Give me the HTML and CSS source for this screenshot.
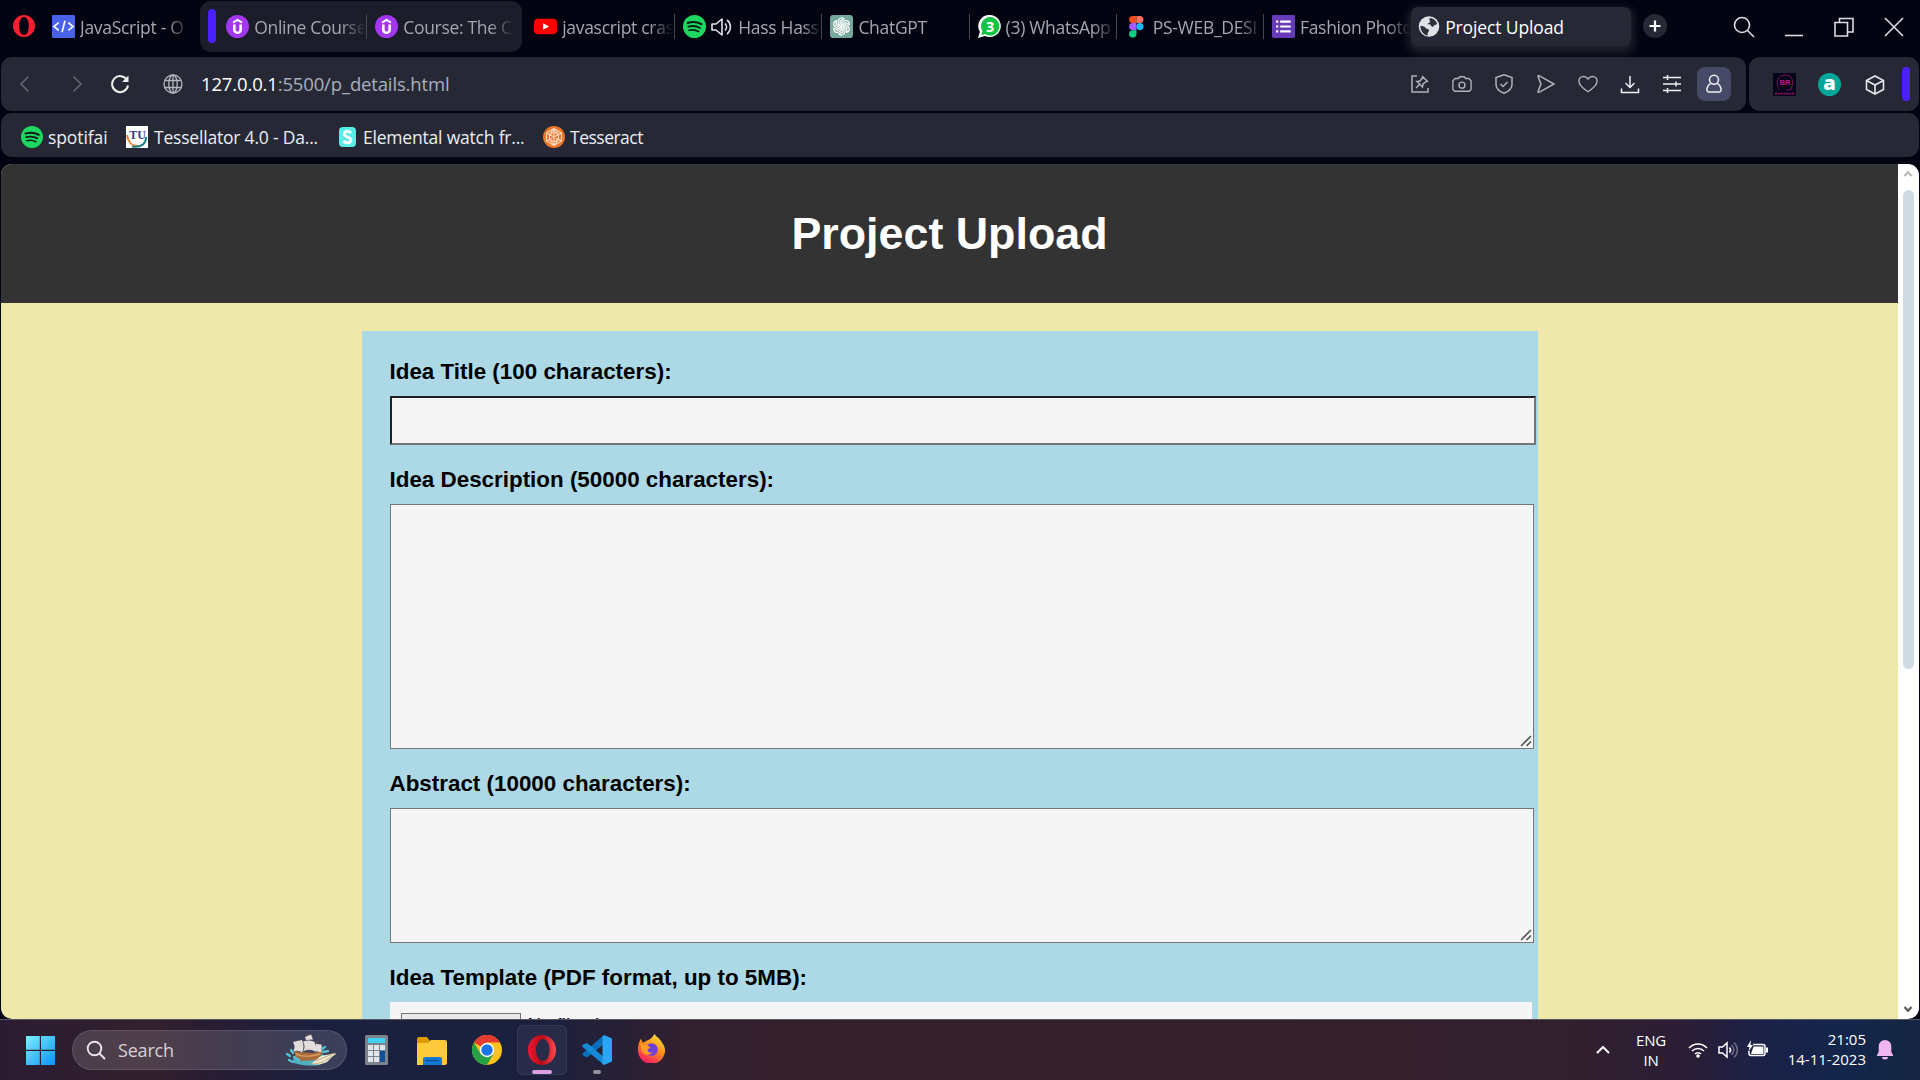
FILE: index.html
```html
<!DOCTYPE html>
<html lang="en">
<head>
<meta charset="utf-8">
<title>Project Upload</title>
<link rel="stylesheet" href="styles.css">
</head>
<body>
<svg class="defs" width="0" height="0">
  <defs>
    <symbol id="spotify" viewBox="0 0 24 24"><circle cx="12" cy="12" r="12" fill="#1ed760"/><g fill="none" stroke="#0b1f18" stroke-linecap="round"><path d="M5 8.2c5-1.500 10-1 14.300 1.300" stroke-width="2.300"/><path d="M5.600 12.200c4.300-1.200 8.600-.8 12.200 1.300" stroke-width="1.900"/><path d="M6.200 16c3.600-.9 7-.6 10.200 1.200" stroke-width="1.600"/></g></symbol>
    <symbol id="udemy" viewBox="0 0 24 24"><circle cx="12" cy="12" r="12" fill="#a435f0"/><path d="M7.300 8 12 5.200 16.700 8" fill="none" stroke="#fff" stroke-width="2"/><path d="M8.700 10v5.300a3.300 3.300 0 0 0 6.600 0V10" fill="none" stroke="#fff" stroke-width="2.700"/></symbol>
  </defs>
</svg>
<div class="browser">
  <div class="tabstrip">
    <svg class="opera-menu" viewBox="0 0 22 22"><path fill="#fa1e32" fill-rule="evenodd" d="M11 0a11 11 0 1 0 0 22 11 11 0 0 0 0-22zM11 2c3 0 4.800 4 4.800 9s-1.800 9-4.800 9-4.800-4-4.800-9S8 2 11 2z"/></svg>
    <div class="tab"><svg class="fav" viewBox="0 0 24 24"><rect width="24" height="24" rx="1" fill="#4a62e8"/><path d="M7 8l-5 4 5 4M17 8l5 4-5 4M13.500 6l-3 12" fill="none" stroke="#fff" stroke-width="1.700"/></svg><span>JavaScript - O</span></div>
    <div class="group">
      <i class="bar"></i>
      <div class="tab sep"><svg class="fav"><use href="#udemy"/></svg><span>Online Course</span></div>
      <div class="tab"><svg class="fav"><use href="#udemy"/></svg><span>Course: The C</span></div>
    </div>
    <div class="tab sep"><svg class="fav" viewBox="0 0 24 24"><rect y="4" width="24" height="16" rx="4" fill="#f00"/><path d="M9.500 8.500v7l6.200-3.500z" fill="#fff"/></svg><span>javascript cras</span></div>
    <div class="tab sep"><svg class="fav"><use href="#spotify"/></svg><svg class="snd" viewBox="0 0 22 20"><path d="M1 7v6h4l6 5V2L5 7zM14 6.500c2 2 2 5 0 7M16 3c4.500 3.500 4.500 10.500 0 14" fill="none" stroke="#e4e5ea" stroke-width="1.600" stroke-linejoin="round"/></svg><span>Hass Hass</span></div>
    <div class="tab sep"><svg class="fav" viewBox="0 0 24 24"><rect width="24" height="24" rx="3.500" fill="#75a99b"/><g fill="none" stroke="#fff" stroke-width="1.300"><path id="gp" d="M12 12l-3.500-2V6.500a3.500 3.500 0 0 1 6-2.300l-4 2.300v3.800"/><use href="#gp" transform="rotate(60 12 12)"/><use href="#gp" transform="rotate(120 12 12)"/><use href="#gp" transform="rotate(180 12 12)"/><use href="#gp" transform="rotate(240 12 12)"/><use href="#gp" transform="rotate(300 12 12)"/></g></svg><span>ChatGPT</span></div>
    <div class="tab sep"><svg class="fav" viewBox="0 0 24 24"><path d="M12.500 0a11.500 11.500 0 1 1-5.300 21.800L0 24l2-6.500A11.500 11.500 0 0 1 12.500 0z" fill="#fff"/><path d="M12.500 2.200a9.600 9.600 0 1 1-5 17.700L3.500 21l1-4.300a9.600 9.600 0 0 1 8-14.500z" fill="#12c443"/><text x="12.500" y="17.300" text-anchor="middle" class="wa">3</text></svg><span>(3) WhatsApp</span></div>
    <div class="tab sep"><svg class="fav" viewBox="0 0 24 24"><path d="M12 1H8a3.700 3.700 0 0 0 0 7.400h4z" fill="#f24e1e"/><path d="M12 1h3.500a3.700 3.700 0 0 1 0 7.400H12z" fill="#ff7262"/><path d="M12 8.400H8a3.700 3.700 0 0 0 0 7.400h4z" fill="#a259ff"/><circle cx="15.600" cy="12.100" r="3.700" fill="#1abcfe"/><path d="M12 15.800H8.300a3.900 3.900 0 1 0 3.700 4z" fill="#0acf83"/></svg><span>PS-WEB_DESI</span></div>
    <div class="tab"><svg class="fav" viewBox="0 0 24 24"><rect width="24" height="24" rx="1.500" fill="#673ab7"/><path d="M8.500 7h11M8.500 12h11M8.500 17h11M4.200 7h2.400M4.200 12h2.400M4.200 17h2.400" stroke="#fff" stroke-width="2.300"/></svg><span>Fashion Photo</span></div>
    <div class="tab active"><svg class="fav" viewBox="0 0 24 24"><circle cx="11.500" cy="12" r="10.700" fill="#dfe1e5"/><path d="M12 3.500c3-1 7 2 8 6-1 1-3 .5-3.500 2-.5 1.200-2.500 1-3-.5-.4-1.300-2-1.500-3.500-1 0-2 2.500-1.500 2.500-3 0-1.200-1-1.500-.5-3.500zM2.500 11.500c3 0 4.500.5 5.500 2 1 1.300 3.500.8 3.500 2.500s-1.500 2-1.500 3.500c0 1 .5 1.500 0 2-4-.5-7.500-5-7.500-10z" fill="#2d303b"/></svg><span>Project Upload</span></div>
    <svg class="newtab" viewBox="0 0 24 24"><circle cx="12" cy="12" r="12" fill="#262935"/><path d="M12 6.500v11M6.500 12h11" stroke="#fff" stroke-width="2.200"/></svg>
    <div class="winctl">
      <svg viewBox="0 0 22 22"><circle cx="9" cy="9" r="7.500"/><path d="M14.500 14.500l6.500 6.500"/></svg>
      <svg viewBox="0 0 22 22"><path d="M2 19.500h18"/></svg>
      <svg viewBox="0 0 22 22"><path d="M2 6.500h12.500V20H2zM6.500 6.500v-4H20V16h-5.500"/></svg>
      <svg viewBox="0 0 22 22"><path d="M2 2l18 18M20 2L2 20"/></svg>
    </div>
  </div>
  <div class="toolbar">
    <div class="panel address">
      <svg class="nav dim" viewBox="0 0 20 20"><path d="M13.500 2.500 6 10l7.500 7.500"/></svg>
      <svg class="nav dim" viewBox="0 0 20 20"><path d="M6.500 2.500 14 10l-7.500 7.500"/></svg>
      <svg class="nav" viewBox="0 0 20 20"><path d="M17 6a8 8 0 1 0 1 5.500" stroke-width="2"/><path d="M18.500 1.500v6.500H12z" fill="#eee" stroke="none"/></svg>
      <svg class="nav globe" viewBox="0 0 20 20"><circle cx="10" cy="10" r="9"/><ellipse cx="10" cy="10" rx="4.200" ry="9"/><path d="M10 1v18M2 6.500h16M2 13.500h16"/></svg>
      <p class="url"><b>127.0.0.1</b>:5500/p_details.html</p>
      <div class="tools">
        <svg viewBox="0 0 20 20"><path d="M7 2H2v16h16v-4M12 2l6 6M13 3l-3 4-3 .5 5.500 5.500.5-3 4-3M9.500 10.500 6 14"/></svg>
        <svg viewBox="0 0 22 20"><path d="M7 4l1.500-2h5L15 4h3.500L21 6.500V16l-2 2H3l-2-2V6.500L3.500 4zM11 8a3.300 3.300 0 1 0 0 6.600A3.300 3.300 0 0 0 11 8z"/></svg>
        <svg viewBox="0 0 20 20"><path d="M10 .8 18 3.500v7c0 4-3.500 7-8 8.700-4.500-1.700-8-4.700-8-8.700v-7zM6.500 10l2.500 2.500 4.500-4.500"/></svg>
        <svg viewBox="0 0 20 20"><path d="M2 2.500Q2 1 3.500 1.800L18 10 3.500 18.200Q2 19 2 17.500L5 10z"/></svg>
        <svg viewBox="0 0 22 20"><path d="M11 18.500C5.500 15 1 11.500 1 6.700 1 1.300 8 0 11 4.500 14 0 21 1.300 21 6.700c0 4.800-4.500 8.300-10 11.800z"/></svg>
        <svg class="lit" viewBox="0 0 20 20"><path d="M10 2v11M5.500 9l4.500 4.500L14.500 9M1.500 14.500V18.500h17v-4"/></svg>
        <svg class="lit" viewBox="0 0 20 20"><path d="M1 3.500h18M1 10h18M1 16.500h18M5.500 1v5M14 7.500v5M5.500 14v5"/></svg>
        <span class="user"><svg class="lit" viewBox="0 0 20 20"><circle cx="10" cy="5.800" r="4.500"/><path d="M6.500 9.500C2 12.500 2 18 5 18h10c3 0 3-5.500-1.500-8.500"/></svg></span>
      </div>
    </div>
    <div class="panel ext">
      <svg class="head" viewBox="0 0 24 24"><rect width="24" height="24" fill="#03041a"/><path d="M6.500 17C2 11 5 2 12.500 2 19 2 21 7 20.500 11c-.2 3-1.500 4-1.500 6l-5 1" fill="none" stroke="#8d125e"/><text x="12.500" y="13" text-anchor="middle" class="gr">BR</text><path d="M2 21.500h20" stroke="#a0106b" stroke-width="2" stroke-dasharray="2 1"/></svg>
      <span class="amz">a</span>
      <svg class="cube" viewBox="0 0 20 20"><path d="M10 1l8.500 4.500v9L10 19l-8.500-4.500v-9zM1.500 5.500 10 10l8.500-4.500M10 10v9"/></svg>
      <i class="bar"></i>
    </div>
  </div>
  <div class="panel bookmarks">
    <a><svg><use href="#spotify"/></svg><span class="b1">spotifai</span></a>
    <a><svg viewBox="0 0 22 22"><rect width="22" height="22" fill="#fff"/><path d="M1 9c1 8 6 11 11 11" fill="none" stroke="#e88634" stroke-width="2"/><path d="M20 11c0 7-5 11-14 9.500" fill="none" stroke="#187d83" stroke-width="2"/><text x="11.500" y="13" text-anchor="middle" class="tu">TU</text></svg><span class="b2">Tessellator 4.0 - Da...</span></a>
    <a><svg class="s" viewBox="0 0 17 22"><rect y="1" width="17" height="20" rx="4" fill="#58ece6"/><path d="M12 7C10 4.500 5 5 5 8s7 3 7 6-5 4-7.500 1" fill="none" stroke="#fff" stroke-width="2.800"/></svg><span class="b3">Elemental watch fr...</span></a>
    <a><svg viewBox="0 0 22 22"><circle cx="11" cy="11" r="11" fill="#ee7428"/><g fill="none" stroke="#fbd7bd" stroke-width="1.100"><path d="M11 2.500 18.500 7v8L11 19.500 3.500 15V7zM11 6l4.500 2.500v5L11 16l-4.500-2.500v-5zM3.500 7l15 8M18.500 7l-15 8M11 2.500v17M6.500 8.500 11 2.500l4.500 6M6.500 13.500l4.500 6 4.500-6"/></g></svg><span class="b4">Tesseract</span></a>
  </div>
  <div class="viewport">
    <div class="page">
      <header><h1>Project Upload</h1></header>
      <form>
        <label>Idea Title (100 characters):</label>
        <input class="field title" type="text">
        <label>Idea Description (50000 characters):</label>
        <div class="field area big"><svg viewBox="0 0 12 12"><path d="M1 11 11 1M6.500 11 11 6.500"/></svg></div>
        <label>Abstract (10000 characters):</label>
        <div class="field area small"><svg viewBox="0 0 12 12"><path d="M1 11 11 1M6.500 11 11 6.500"/></svg></div>
        <label>Idea Template (PDF format, up to 5MB):</label>
        <div class="file"><button type="button">Choose File</button><span>No file chosen</span></div>
      </form>
    </div>
    <div class="scroll">
      <svg class="up" viewBox="0 0 10 8"><path d="M1.500 6 5 2.200 8.500 6"/></svg>
      <i></i>
      <svg class="down" viewBox="0 0 10 8"><path d="M1.500 2 5 5.800 8.500 2"/></svg>
    </div>
  </div>
</div>
<div class="taskbar">
  <svg class="win" viewBox="0 0 30 30"><defs><linearGradient id="wg" x1="0" y1="0" x2="1" y2="1"><stop stop-color="#7af0ff"/><stop offset="1" stop-color="#0a93f5"/></linearGradient></defs><path d="M0 0h14.300v14.300H0zM15.500 0H30v14.300H15.500zM0 15.500h14.300V30H0zM15.500 15.500H30V30H15.500z" fill="url(#wg)"/></svg>
  <div class="search">
    <svg class="lens" viewBox="0 0 20 20"><circle cx="8.500" cy="8.500" r="6.800"/><path d="M13.500 13.500 19 19"/></svg>
    <span>Search</span>
    <svg class="ship" viewBox="0 0 52 32"><path d="M9 29c-2-4 0-8 4-9h24l6 3-8 8c-9 1-17 1-26-2z" fill="#4fb0c0"/><path d="M9 15l4 3 16 1 9-4c-1 6-3 9-7 11l-14 1c-5-1-8-6-8-12z" fill="#a86b3c"/><path d="M11 20c6 3 14 3 24 0" stroke="#d89a5a" stroke-width="1.500" fill="none"/><path d="M23 0v18M13 6v12M32 7v10" stroke="#7b5b45"/><path d="M20 3l6-2.500 2 5-7 .5zM18 7.500c4-1.500 8-1.500 11.500.5 2 4 2 7 1 10-4-3-8-3-12.500-.5 2-3 2-7 0-10zM8 8l9-2c2 4 2 9 0 12.500-3-2-6-2.500-9-1C10 15 10 11 8 8zM31 10l5.500.500q1 4-.5 8l-5-1.500z" fill="#e3dcdc"/><path d="M26 30l10-8 15-3-9 9c-4 2-10 3-16 2z" fill="#f2e9d2"/><path d="M26 30c7 0 12-2 15-4l10-6M31 27l16-7" stroke="#c3ac83" fill="none"/><path d="M2 20l3 2M4 26l4 2M6 16l2 3M37 15l3-2M38 18l5-1M9 23l5 3" stroke="#55c2d3" stroke-width="2.300" stroke-linecap="round"/></svg>
  </div>
  <svg class="calc" viewBox="0 0 23 30"><rect width="23" height="30" rx="1.500" fill="#7d838b"/><rect x="3" y="3" width="17" height="5" fill="#3fd0f5"/><g fill="#e1e6ec"><path d="M3 10h5v5H3zM9 10h5v5H9zM15 10h5v5h-5zM3 16h5v5H3zM9 16h5v5H9zM3 22h5v5H3zM9 22h5v5H9z"/></g><path d="M15 16h5v11h-5z" fill="#11509c"/></svg>
  <svg class="folder" viewBox="0 0 30 28"><path d="M0 2q0-2 2-2h8l3 4h15v6H0z" fill="#dd9a05"/><path d="M0 6h11l3-3h14q2 0 2 2v21q0 2-2 2H0z" fill="#fdca3e"/><path d="M6 28v-6q0-2 2-2h15q2 0 2 2v6z" fill="#1279d3"/><path d="M9 23.500h13" stroke="#07529d" stroke-width="1.500"/></svg>
  <svg class="chrome" viewBox="0 0 30 30"><circle cx="15" cy="15" r="15" fill="#fcc31e"/><path d="M15 15 2 7.500A15 15 0 0 1 28 7.500H15z" fill="#e33b2e"/><path d="M2 7.500 8.500 18.800 15 22.500 15 30A15 15 0 0 1 2 7.500z" fill="#26a148"/><path d="M15 30l6.500-11.300-6.500 3.800-6.500-3.700z" fill="#26a148"/><circle cx="15" cy="15" r="7.200" fill="#fff"/><circle cx="15" cy="15" r="5.700" fill="#1b73e8"/></svg>
  <div class="app open"><svg viewBox="0 0 30 30"><defs><linearGradient id="og" x1="0" x2="1"><stop stop-color="#ef1630"/><stop offset=".5" stop-color="#b80a18"/><stop offset="1" stop-color="#ff4b50"/></linearGradient></defs><path fill="url(#og)" fill-rule="evenodd" d="M15 0C7 0 1 6.500 1 15s6 15 14 15 14-6.500 14-15S23 0 15 0zM16 4c4 0 6.500 5 6.500 11s-2.500 11-6.500 11-7-5-7-11S12 4 16 4z"/></svg><i></i></div>
  <div class="app code"><svg viewBox="0 0 30 30"><path d="M22 0v9L5 22.500 1 20.500 0 19z" fill="#0a6fba"/><path d="M22 30v-8L5 8 1 9.500 0 11.500z" fill="#1489d6"/><path d="M22 0l8 3.500v23L22 30l-1.500-1.500v-27z" fill="#2ba4f3"/></svg><i></i></div>
  <svg class="fox" viewBox="0 0 30 30"><defs><linearGradient id="fg" x1=".8" y1="0" x2=".3" y2="1"><stop stop-color="#ffe43a"/><stop offset=".5" stop-color="#ff8a1c"/><stop offset="1" stop-color="#f5156c"/></linearGradient></defs><path d="M18 0c2 3 5 4 8 9 3 4 4 8 2 13a14 14 0 0 1-26 0C0 17 1 10 4 5l2 4 4-2c3-1 6-3 8-7z" fill="url(#fg)"/><circle cx="15" cy="16" r="6.500" fill="#7140d8"/><path d="M3 10l7 1 4 3-3 2c0 3 3 4 5 3-2 4-9 3-11-1z" fill="#ff9a22"/></svg>
  <div class="tray">
    <svg class="chev" viewBox="0 0 14 8"><path d="M1 7l6-6 6 6"/></svg>
    <p class="lang">ENG<br>IN</p>
    <svg class="wifi" viewBox="0 0 20 16"><path d="M1 6c5-5.500 13-5.500 18 0M4 9c3.500-3.500 8.500-3.500 12 0M7 12c1.500-1.800 4.500-1.800 6 0"/><circle cx="10" cy="14" r="1.800" fill="#fff" stroke="none"/></svg>
    <svg class="vol" viewBox="0 0 20 18"><path d="M1 6v6h3.500L9 16V2L4.500 6zM11.500 6.500c1.300 1.500 1.300 3.500 0 5"/><path d="M13.500 4c3 3 3 7 0 10M16 1.500c4.500 4.500 4.500 10.500 0 15" opacity=".35"/></svg>
    <svg class="bat" viewBox="0 0 21 17"><path d="M6 4.500h10q2 0 2 2v7q0 2-2 2H4q-2 0-2-2V11"/><path d="M6.500 6.500h10v7.500H4zM19 7.500h2v5h-2zM4 0 0 7h2.500L1.500 11.500 6 5H3.500z" fill="#fff" stroke="none"/></svg>
    <p class="clock">21:05<br>14-11-2023</p>
    <svg class="bell" viewBox="0 0 16 20"><path d="M8 0a6.300 6.300 0 0 1 6.300 6.300V12L16 15v1H0v-1l1.700-3V6.300A6.300 6.300 0 0 1 8 0zM5 17h6a3 2.500 0 0 1-6 0z" fill="#efb6f0"/></svg>
  </div>
</div>
</body>
</html>
```
FILE: styles.css
```css
* { box-sizing: border-box; }
body { margin: 0; width: 1920px; height: 1080px; overflow: hidden; background: #020412; font-family: "Open Sans", "Noto Sans", sans-serif; display: flex; flex-direction: column; }
svg { display: block; flex: none; }
p { margin: 0; }
.defs { display: none; }
.browser { height: 1019px; padding: 0 1px; display: flex; flex-direction: column; }

.tabstrip { height: 57px; flex: none; display: flex; align-items: flex-start; padding-left: 12px; }
.opera-menu { width: 22px; height: 22px; margin: 15px 9px 0 0; }
.tab { width: 147.200px; height: 39px; margin-top: 7px; padding: 0 0 0 8px; display: flex; align-items: center; gap: 5px; color: #a6a7ac; font-size: 17.500px; letter-spacing: -.3px; white-space: nowrap; flex: none; }
.tab span { flex: 1; overflow: hidden; line-height: 28px; padding-top: 1px; -webkit-mask-image: linear-gradient(90deg, #000 78%, transparent); mask-image: linear-gradient(90deg, #000 78%, transparent); }
.tab.sep { border-right: 1px solid #454753; height: 25px; margin-top: 14px; }
.fav { width: 23px; height: 23px; }
.snd { width: 22px; height: 20px; }
.group { width: 322px; height: 51px; margin: 1px 4px 0 9px; border-radius: 11px; background: #1b1d2a; display: flex; padding-left: 8px; }
.group .tab { margin-top: 6px; }
.group .tab.sep { margin-top: 13px; width: 149px; }
.group + .tab.sep { width: 149px; }
.bar { width: 8px; height: 34px; border-radius: 4px; background: #4a20ff; flex: none; }
.group .bar { margin: 8px 2px 0 0; }
.wa { font: bold 15px "Open Sans", sans-serif; fill: #fff; }
.tab.active { width: 220px; height: 39px; margin-left: 0; padding-left: 7px; border-radius: 7px; background: #262935; color: #fff; box-shadow: 0 4px 9px 3px #20232e; gap: 4px; letter-spacing: -.12px; }
.tab.active span { -webkit-mask-image: none; mask-image: none; }
.newtab { width: 24px; height: 24px; margin: 14px 0 0 12px; }
.winctl { margin: 16px 14px 0 auto; display: flex; gap: 28px; }
.winctl svg { width: 22px; height: 22px; fill: none; stroke: #dcdde1; stroke-width: 1.600; }

.panel { background: #262935; border-radius: 11px; display: flex; align-items: center; }
.toolbar { height: 54px; flex: none; display: flex; gap: 3px; }
.address { width: 1745px; flex: none; padding: 0 15px 0 14px; }
.nav { width: 20px; height: 20px; fill: none; stroke: #eee; stroke-width: 1.500; margin-right: 32px; }
.nav + .nav { margin-right: 23px; }
.nav.dim { stroke: #666975; }
.nav.globe { stroke: #b5b7bd; stroke-width: 1.300; }
.nav + .nav.globe { margin-right: 17px; margin-left: 10px; }
.url { font-size: 18.500px; letter-spacing: -.15px; color: #a9b0bd; line-height: 28px; margin-left: 1px; }
.url b { font-weight: 400; color: #fff; }
.tools { margin-left: auto; display: flex; align-items: center; gap: 22px; }
.tools svg { width: 20px; height: 20px; fill: none; stroke: #b2b3b9; stroke-width: 1.500; }
.tools svg.lit { stroke: #f0f0f3; }
.user { width: 34px; height: 34px; border-radius: 8px; background: #474a66; display: grid; place-items: center; margin-left: -7px; }
.ext { width: 170px; flex: none; padding: 0 9px 0 24px; }
.head { width: 23px; height: 23px; }
.gr { font: bold 8px "Liberation Sans", sans-serif; fill: #c51586; }
.amz { width: 23px; height: 23px; border-radius: 50%; background: #00a698; color: #fff; font: 800 20px/19px "Open Sans", sans-serif; text-align: center; margin-left: 22px; }
.cube { width: 20px; height: 20px; margin: 2px 0 0 24px; fill: none; stroke: #e6e6e9; stroke-width: 1.600; }
.ext .bar { margin-left: auto; }

.bookmarks { height: 44px; flex: none; margin: 2px 0 7px; padding: 4px 0 0 20px; }
.bookmarks a { display: flex; align-items: center; gap: 5px; font-size: 17.500px; color: #eceef2; white-space: nowrap; line-height: 26px; }
.bookmarks svg { width: 22px; height: 22px; }
.bookmarks svg.s { width: 17px; }
.b1 { width: 60px; margin-right: 18px; letter-spacing: -.1px; }
.b2 { width: 165px; margin: 0 20px 0 1px; letter-spacing: -.2px; }
.b3 { width: 162px; margin: 0 18px 0 2px; letter-spacing: -.2px; }
.b4 { letter-spacing: -.5px; }
.tu { font: bold 12px "Liberation Serif", serif; fill: #3a3a86; }

.viewport { height: 855px; flex: none; display: flex; border-radius: 11px; overflow: hidden; }
.page { width: 1897px; flex: none; background: #eee8aa; overflow: hidden; font-family: "Liberation Sans", Arial, sans-serif; }
header { height: 139px; background: #333; color: #fff; display: grid; place-items: center; padding-bottom: 2px; }
h1 { margin: 0; font-size: 44.800px; line-height: 52px; }
form { width: 1176px; margin: 28px auto; padding: 28px; background: #add8e6; }
label { display: block; height: 26px; margin-bottom: 11px; font-size: 22.400px; line-height: 25px; font-weight: 700; letter-spacing: 0; white-space: nowrap; }
.field { display: block; margin: 0 0 22px; background: #f5f5f5; }
.title { width: 1146px; height: 49px; padding: 0 14px; border: 2px solid; border-color: #202024 #767676 #767676 #202024; border-radius: 0; }
.area { width: 1144px; border: 1px solid #767676; display: flex; justify-content: flex-end; align-items: flex-end; padding: 0 1px 1px; }
.area svg { width: 12px; height: 12px; stroke: #555; stroke-width: 1.600; }
.big { height: 245px; }
.small { height: 135px; }
.file { width: 1142px; height: 54px; background: #f5f5f5; padding: 11px; display: flex; align-items: flex-start; gap: 7px; font-size: 18.700px; }
.file button { width: 120px; height: 30px; padding: 0; border: 1px solid #767676; background: #e9e9e9; font: 18.700px "Liberation Sans", sans-serif; }
.file span { line-height: 22px; padding-top: 1px; }
.scroll { width: 21px; background: #fff; display: flex; flex-direction: column; align-items: center; padding: 6px 1px 6px 0; }
.scroll i { width: 11px; height: 479px; margin-top: 12px; border-radius: 6px; background: #d0dbe3; }
.scroll svg { width: 10px; height: 8px; fill: none; stroke: #b9b9b9; stroke-width: 2.200; }
.scroll svg.down { margin-top: auto; stroke: #5c5c5c; }

.taskbar { height: 61px; border-top: 1px solid #555663; background: linear-gradient(90deg, #2a1c32 0, #33202d 150px, #2a1d32 200px, #1b203f 320px, #1b203f 540px, #33202d 690px, #35212a 1000px, #33202d 1560px, #2a1d36 1690px, #1b2148 1760px, #13264a 1850px, #152542 1920px); display: flex; align-items: flex-start; padding-left: 26px; }
.win { width: 29px; height: 29px; margin: 16px 17px 0 0; }
.search { width: 275px; height: 40px; margin-top: 10px; border-radius: 20px; background: rgba(255,255,255,.14); border: 1px solid rgba(255,255,255,.12); display: flex; align-items: center; padding: 0 9px 0 13px; color: #d8d1d6; font-size: 18px; }
.search span { margin-left: 12px; letter-spacing: -.2px; }
.lens { width: 20px; height: 20px; fill: none; stroke: #e8e4e8; stroke-width: 1.900; }
.ship { width: 52px; height: 32px; margin-left: auto; }
.calc { width: 23px; height: 30px; margin: 15px 0 0 18px; }
.folder { width: 30px; height: 28px; margin: 17px 0 0 29px; }
.chrome { width: 30px; height: 30px; margin: 15px 0 0 25px; }
.app { width: 50px; height: 50px; display: flex; flex-direction: column; align-items: center; padding-top: 10px; margin: 5px 0 0; }
.app svg { width: 30px; height: 30px; }
.app i { height: 4px; border-radius: 2px; margin-top: 5px; }
.open { margin-left: 15px; border-radius: 6px; background: #282c49; box-shadow: inset 0 0 0 1px #363954; }
.open i { width: 20px; background: #db9fe2; }
.code { margin-left: 5px; }
.code i { width: 8px; background: #9493a2; }
.fox { width: 29px; height: 29px; margin: 14px 0 0 15px; }
.tray { margin: 0 27px 0 auto; height: 60px; display: flex; align-items: center; color: #fff; font-size: 15px; line-height: 20px; letter-spacing: -.2px; }
.tray svg { fill: none; stroke: #fff; stroke-width: 1.500; }
.tray .chev { width: 14px; height: 8px; stroke-width: 2; }
.lang { width: 30px; margin: 0 22px 0 26px; text-align: center; }
.wifi { width: 20px; height: 16px; }
.vol { width: 20px; height: 18px; margin-left: 10px; }
.bat { width: 21px; height: 17px; margin: 0 0 3px 9px; }
.clock { width: 82px; margin: 0 11px 3px 16px; text-align: right; white-space: nowrap; letter-spacing: 0; }
.tray .bell { width: 16px; height: 20px; stroke: none; }
```
